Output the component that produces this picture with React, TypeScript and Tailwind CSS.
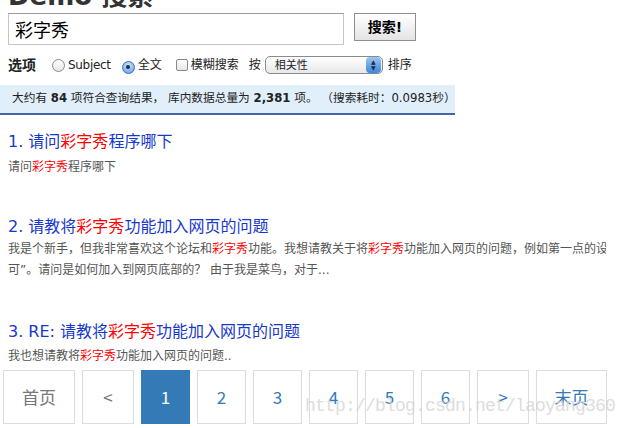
import React from "react";

const HL = ({ children }: { children: React.ReactNode }) => <span className="text-[#ff0000]">{children}</span>;

function Radio({ checked }: { checked?: boolean }) {
  return checked ? (
    <span className="inline-flex w-[13px] h-[13px] rounded-full items-center justify-center border border-[#3b6fb8] bg-[radial-gradient(circle_at_50%_30%,#cfe4fb,#5a9be6)]">
      <span className="w-[4px] h-[4px] rounded-full bg-[#1b2a44]" />
    </span>
  ) : (
    <span className="inline-block w-[13px] h-[13px] rounded-full border border-[#8a8a8a] bg-[linear-gradient(#ffffff,#e6e6e6)]" />
  );
}

function PageBox({ w, active, color, children }: { w: string; active?: boolean; color?: string; children: React.ReactNode }) {
  return (
    <div
      className={`${w} h-[54px] flex items-center justify-center border ${
        active ? "bg-[#337ab7] border-[#337ab7] text-white" : `border-[#dddddd] bg-white ${color ?? "text-[#337ab7]"}`
      } text-[17px]`}
    >
      {children}
    </div>
  );
}

export default function App() {
  return (
    <div className="relative w-[627px] h-[428px] overflow-hidden bg-white font-['DejaVu_Sans','Noto_Sans_CJK_SC',sans-serif] text-[#222]">
      <div className="px-2">
        <h1 className="-mt-[17px] text-[26px] leading-[26px] font-bold text-[#333] whitespace-nowrap">Demo 搜索</h1>

        <div className="mt-[4px] flex items-start gap-[10px]">
          <div className="w-[336px] h-[32px] border border-[#c4c4c4] border-t-[#9a9a9a] flex items-center pl-[6px] text-[18px] font-['Noto_Sans_CJK_SC',sans-serif] text-black">
            彩字秀
          </div>
          <button className="w-[62px] h-[28px] border border-[#8f8f8f] bg-[linear-gradient(#ffffff,#e4e4e4)] text-[14px] font-bold text-black flex items-center justify-center">
            搜索!
          </button>
        </div>

        <div className="mt-[11px] h-[18px] flex items-center text-[12px] text-[#222] whitespace-nowrap">
          <span className="text-[14px] font-bold w-[44px]">选项</span>
          <Radio />
          <span className="ml-[3px] text-[12px] tracking-[-0.3px]">Subject</span>
          <span className="ml-[11px]"><Radio checked /></span>
          <span className="ml-[3px]">全文</span>
          <span className="ml-[14px] inline-block w-[12px] h-[12px] border border-[#8a8a8a] rounded-[2px] bg-[linear-gradient(#ffffff,#e6e6e6)]" />
          <span className="ml-[3px]">模糊搜索</span>
          <span className="ml-[10px]">按</span>
          <div className="ml-[4px] w-[118px] h-[18px] border border-[#8a8a8a] rounded-[5px] bg-[linear-gradient(#ffffff,#e8e8e8)] flex items-center justify-between overflow-hidden">
            <span className="pl-[9px] text-[11px] leading-none">相关性</span>
            <span className="w-[15px] h-[16px] mr-[1px] rounded-[4px] bg-[linear-gradient(#9cc6f2,#3e86de)] flex flex-col items-center justify-center text-[6px] leading-[6px] text-[#1a2a40]">
              <span>▲</span>
              <span>▼</span>
            </span>
          </div>
          <span className="ml-[5px]">排序</span>
        </div>
      </div>

      <div className="mt-[11px] w-[455px] h-[30px] bg-[#e1effb] border-b-2 border-[#4466a8] flex items-center pl-[12px] text-[11.7px] text-[#222] whitespace-nowrap">
        大约有&nbsp;<b>84</b>&nbsp;项符合查询结果，&nbsp;库内数据总量为&nbsp;<b>2,381</b>&nbsp;项。&nbsp;（搜索耗时：0.0983秒）
      </div>

      <div className="px-2 w-[606px] overflow-hidden">
        <div className="mt-[17px] text-[16px] leading-[20px] text-[#1838cc] whitespace-nowrap">
          1. 请问<HL>彩字秀</HL>程序哪下
        </div>
        <div className="mt-[6px] text-[12px] leading-[18px] text-[#555] whitespace-nowrap">
          请问<HL>彩字秀</HL>程序哪下
        </div>

        <div className="mt-[41px] text-[16px] leading-[20px] text-[#1838cc] whitespace-nowrap">
          2. 请教将<HL>彩字秀</HL>功能加入网页的问题
        </div>
        <div className="mt-[2px] text-[12px] leading-[21px] text-[#555] whitespace-nowrap">
          <div>
            我是个新手，但我非常喜欢这个论坛和<HL>彩字秀</HL>功能。我想请教关于将<HL>彩字秀</HL>功能加入网页的问题，例如第一点的设置
          </div>
          <div>可”。请问是如何加入到网页底部的？ 由于我是菜鸟，对于...</div>
        </div>

        <div className="mt-[41px] text-[16px] leading-[20px] text-[#1838cc] whitespace-nowrap">
          3. RE: 请教将<HL>彩字秀</HL>功能加入网页的问题
        </div>
        <div className="mt-[5px] text-[12px] leading-[18px] text-[#555] whitespace-nowrap">
          我也想请教将<HL>彩字秀</HL>功能加入网页的问题..
        </div>
      </div>

      <div className="mt-[5px] ml-[3px] flex gap-[7px] font-['Noto_Sans_CJK_SC',sans-serif]">
        <PageBox w="w-[72px]" color="text-[#777]">首页</PageBox>
        <PageBox w="w-[52px]" color="text-[#777]">&lt;</PageBox>
        <PageBox w="w-[49px]" active>1</PageBox>
        <PageBox w="w-[49px]">2</PageBox>
        <PageBox w="w-[49px]">3</PageBox>
        <PageBox w="w-[49px]">4</PageBox>
        <PageBox w="w-[49px]">5</PageBox>
        <PageBox w="w-[49px]">6</PageBox>
        <PageBox w="w-[52px]">&gt;</PageBox>
        <PageBox w="w-[71px]">末页</PageBox>
      </div>

      <div className="absolute left-[305px] top-[394px] text-[18px] leading-[24px] tracking-[-0.8px] font-['Liberation_Mono',monospace] text-[#d4d4d4]/80 whitespace-nowrap pointer-events-none">
        http://blog.csdn.net/laoyang360
      </div>
    </div>
  );
}
